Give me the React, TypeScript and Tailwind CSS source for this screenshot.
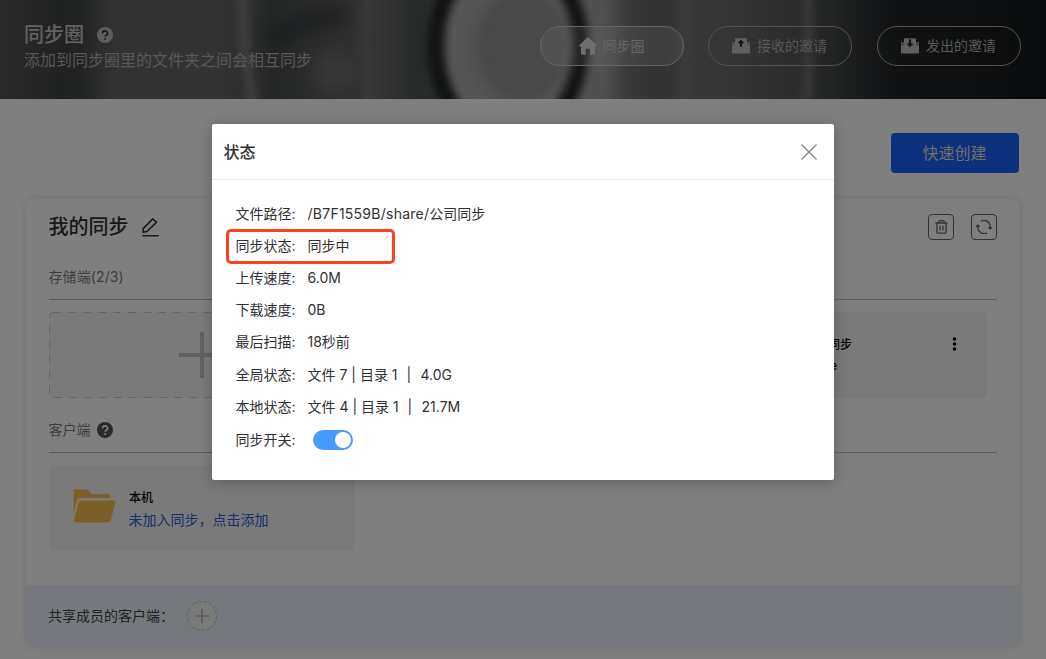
import type { ReactNode } from "react";

function HeaderBackdrop() {
  return (
    <svg className="absolute inset-0 h-full w-full" viewBox="0 0 1046 99" preserveAspectRatio="none" aria-hidden="true">
      <defs>
        <linearGradient id="base" gradientUnits="userSpaceOnUse" x1="0" y1="0" x2="1046" y2="0">
          <stop offset="0" stopColor="#545454" />
          <stop offset="0.025" stopColor="#4c4d4e" />
          <stop offset="0.06" stopColor="#404344" />
          <stop offset="0.08" stopColor="#46484a" />
          <stop offset="0.11" stopColor="#666666" />
          <stop offset="0.21" stopColor="#686868" />
          <stop offset="0.225" stopColor="#606162" />
          <stop offset="0.26" stopColor="#4a4d4e" />
          <stop offset="0.32" stopColor="#5a5b5c" />
          <stop offset="0.36" stopColor="#686868" />
          <stop offset="0.40" stopColor="#505354" />
          <stop offset="0.55" stopColor="#949494" />
          <stop offset="0.575" stopColor="#989898" />
          <stop offset="0.60" stopColor="#747474" />
          <stop offset="0.63" stopColor="#646464" />
          <stop offset="0.655" stopColor="#707070" />
          <stop offset="0.70" stopColor="#6c6c6c" />
          <stop offset="0.76" stopColor="#565758" />
          <stop offset="0.80" stopColor="#424546" />
          <stop offset="0.83" stopColor="#303335" />
          <stop offset="0.86" stopColor="#222427" />
          <stop offset="0.94" stopColor="#1b1d1f" />
          <stop offset="1" stopColor="#121518" />
        </linearGradient>
        <filter id="soft" filterUnits="userSpaceOnUse" x="-60" y="-160" width="1166" height="420" colorInterpolationFilters="sRGB">
          <feGaussianBlur stdDeviation="9" />
        </filter>
        <filter id="fine" filterUnits="userSpaceOnUse" x="-60" y="-160" width="1166" height="420" colorInterpolationFilters="sRGB">
          <feGaussianBlur stdDeviation="4" />
        </filter>
      </defs>
      <rect width="1046" height="99" fill="url(#base)" />
      <path d="M268 45Q290 20 350 14" fill="none" stroke="#34373a" strokeWidth="18" opacity="0.8" filter="url(#soft)" />
      <ellipse cx="335" cy="72" rx="22" ry="18" fill="#808080" opacity="0.6" filter="url(#soft)" />
      <path d="M371 -30Q359 50 374 130" fill="none" stroke="#7e7e7e" strokeWidth="8" opacity="0.8" filter="url(#fine)" />
      <path d="M243 -30Q239 45 259 130" fill="none" stroke="#949494" strokeWidth="8" opacity="0.8" filter="url(#fine)" />
      <path d="M806 -30Q812 50 804 130" fill="none" stroke="#858585" strokeWidth="8" opacity="0.7" filter="url(#fine)" />
      <path d="M681 -30Q688 50 681 130" fill="none" stroke="#848484" strokeWidth="6" opacity="0.6" filter="url(#fine)" />
      <ellipse cx="545" cy="48" rx="65" ry="150" fill="#a2a2a2" filter="url(#soft)" />
      <ellipse cx="508" cy="46" rx="72" ry="94" fill="#acacac" stroke="#212326" strokeWidth="17" filter="url(#fine)" />
      <ellipse cx="522" cy="46" rx="46" ry="56" fill="#8c8c8c" filter="url(#soft)" />
      <ellipse cx="523" cy="46" rx="40" ry="50" fill="#929292" filter="url(#fine)" />
    </svg>
  );
}

function HelpIcon({ className }: { className: string }) {
  return (
    <svg className={className} viewBox="0 0 16 16" width="16" height="16" aria-hidden="true">
      <circle cx="8" cy="8" r="8" fill="currentColor" />
      <path d="M5.6 6.2A2.45 2.3 0 1 1 9.2 8.2Q8.1 8.8 8.1 9.7" fill="none" className="stroke-(--mark)" strokeWidth="1.6" />
      <circle cx="8.1" cy="12" r="1" className="fill-(--mark)" />
    </svg>
  );
}

function HomeIcon() {
  return (
    <svg width="18" height="18" viewBox="0 0 18 18" fill="#dedede" aria-hidden="true">
      <path d="M8.3.4a1 1 0 0 1 1.4 0L17.7 8.3q.7.9-.4 1H16v7.4q0 1.1-1 1.1h-3.7v-5.3q0-.8-.8-.8h-3q-.8 0-.8.8v5.3H3q-1 0-1-1.1V9.300H.7q-1.100-.1-.4-1Z" />
    </svg>
  );
}

function TrayIcon({ down = false }: { down?: boolean }) {
  return (
    <svg width="18" height="16" viewBox="0 0 18 16" fill="#c0c0c0" aria-hidden="true">
      <path d="M0 4h3v3.500H0zM15 4h3v3.500h-3z" opacity=".65" />
      <path d="M0 7.200h3V1q0-.8.8-.8h10.400q.8 0 .8.8v6.200H18v7.300q0 1-1 1H1q-1 0-1-1Z" />
      {down && <path d="M5 6.300l4 4 4-4z" opacity=".3" fill="#292b2d" />}
      <path
        d={down ? "M7.900 1.300h2.200v4h2.300L9 8.900 5.600 5.300h2.300z" : "M9 1.500l3.500 3.800h-2.400v3.500H7.900V5.300H5.500z"}
        fill="#292b2d"
      />
    </svg>
  );
}

function Pill({ icon, active = false, children }: { icon: ReactNode; active?: boolean; children: ReactNode }) {
  return (
    <button
      className={`flex h-10 w-36 items-center justify-center rounded-full border text-sm ${active ? "gap-[6px] border-[#c8c8c8] bg-white/15 pr-px text-[#cccccc]" : "gap-[7px] border-[#a4a4a4] pr-px text-[#b0b0b0]"}`}
    >
      {icon}
      <span>{children}</span>
    </button>
  );
}

function FolderIcon() {
  return (
    <svg className="shrink-0" width="43" height="34" viewBox="0 0 43 34" fill="#f5c04c" aria-hidden="true">
      <path d="M.5 25V1.500Q.5.2 2 .2h11.500q1 0 1.800.7l4 4.300h16q2 0 2 2V9H8.500Q4.500 9 3.600 12.500Z" />
      <path d="M8 11.500h32.800q1.900 0 1.400 1.800L37.900 31.400q-.6 2-2.500 2H2.500q-2.100 0-1.600-2L5.500 13.500q.5-2 2.500-2Z" />
    </svg>
  );
}

function SquareButton({ children }: { children: ReactNode }) {
  return (
    <button className="flex size-[26px] items-center justify-center rounded-[4px] border border-[#666] text-[#666]">
      {children}
    </button>
  );
}

function SyncCard() {
  return (
    <section className="mx-[26px] mt-[26px] h-[448px] rounded-[8px] bg-white shadow-[0_0_9px_rgba(0,0,0,0.12)]">
      <div className="h-[386px] pt-[15px] pr-[23px] pl-[23px]">
        <div className="flex h-[26px] items-center justify-between">
          <div className="flex items-center gap-[13.5px]">
            <h2 className="-ml-[0.5px] text-[20px] leading-[26px] font-medium text-[#303133]">我的同步</h2>
            <svg width="17" height="19" viewBox="0 0 17 19" fill="none" stroke="#333" strokeWidth="1.600" strokeLinejoin="round" strokeLinecap="round" aria-hidden="true">
              <path d="M1.200 14.300V10.600L10.700.9l3.900 3.200L5 13.500Z" />
              <path d="M1 17.800h15.200" />
            </svg>
          </div>
          <div className="flex gap-[17px]">
            <SquareButton>
              <svg width="13" height="14" viewBox="0 0 13 14" fill="none" stroke="currentColor" strokeWidth="1.300" aria-hidden="true">
                <path d="M.3 3h12.400M3.800 3V1.500q0-.8.8-.8h3.800q.8 0 .8.8V3M1.900 3v8.900q0 1.200 1.200 1.200h6.800q1.200 0 1.200-1.200V3M5 5.800v4.700M8 5.800v4.700" />
              </svg>
            </SquareButton>
            <SquareButton>
              <svg width="16" height="14" viewBox="0 0 16 14" fill="none" stroke="currentColor" strokeWidth="1.200" aria-hidden="true">
                <path d="M5 1.200A6.200 6.200 0 0 1 14.200 7v1M11 12.800A6.200 6.200 0 0 1 1.800 7V6" />
                <path d="M.5 6.500 1.800 4.900l1.300 1.600ZM12.900 7.500l1.300 1.600 1.300-1.600Z" fill="currentColor" />
              </svg>
            </SquareButton>
          </div>
        </div>

        <div className="mt-[23px] flex h-[37px] items-start border-b border-[#bbb] text-sm leading-[28px] text-[#7c7c7c]">
          <span className="-ml-[0.5px] tracking-[0.1px]">存储端(2/3)</span>
        </div>
        <div className="mt-3 flex gap-[10px]">
          <div className="h-[86px] w-[306px] rounded-[4px] bg-[#f5f5f5]">
            <svg className="h-full w-full" viewBox="0 0 306 86" fill="none" aria-hidden="true">
              <rect x=".5" y=".5" width="305" height="85" rx="4" stroke="#c8c8c8" strokeDasharray="7.500 7.500" />
              <path d="M130 43h46M153 20v46" stroke="#c4c4c4" strokeWidth="4" />
            </svg>
          </div>
          <div className="h-[86px] w-[306px] rounded-[4px] bg-[#f5f5f5]" />
          <div className="flex h-[86px] w-[306px] justify-between rounded-[4px] bg-[#f5f5f5] pt-[22px] pr-[30px] text-xs text-black">
            <div className="w-[171px] text-right leading-[21px] font-medium">
              <p>公司同步</p>
              <p className="pr-[15px]">share</p>
            </div>
            <svg width="5" height="14" viewBox="0 0 5 14" className="mt-[3px]" aria-hidden="true">
              <circle cx="2.500" cy="2" r="1.800" />
              <circle cx="2.500" cy="7" r="1.800" />
              <circle cx="2.500" cy="12" r="1.800" />
            </svg>
          </div>
        </div>

        <div className="mt-[18px] flex h-[37px] items-start gap-[7px] border-b border-[#bbb] text-sm leading-[28px] text-[#7c7c7c]">
          <span className="-ml-[0.5px]">客户端</span>
          <HelpIcon className="mt-[6px] -ml-[0.5px] text-[#555] [--mark:#fff]" />
        </div>
        <div className="mt-3 flex h-[86px] w-[306px] items-start gap-[13px] rounded-[4px] bg-[#f5f5f5] pt-6 pl-6">
          <FolderIcon />
          <div className="-mt-px">
            <p className="text-xs leading-[20px] font-medium text-black">本机</p>
            <p className="-ml-[0.5px] text-sm leading-[23px] text-[#285fd3]">未加入同步，点击添加</p>
          </div>
        </div>
      </div>
      <footer className="flex h-[62px] items-center gap-[20px] rounded-b-[8px] bg-[#eaf2fd] pl-[22px]">
        <span className="text-sm text-[#444]">共享成员的客户端：</span>
        <svg className="-ml-[7px]" width="30" height="30" viewBox="0 0 30 30" fill="none" aria-hidden="true">
          <circle cx="15" cy="15" r="14.500" fill="#f5f5f5" stroke="#c0c0c0" strokeDasharray="3 2" />
          <path d="M8 15h14M15 8v14" stroke="#b8b8b8" strokeWidth="1.600" />
        </svg>
      </footer>
    </section>
  );
}

function StatusRow({ label, tall = false, children }: { label: string; tall?: boolean; children: ReactNode }) {
  return (
    <div className={`flex items-center ${tall ? "h-[33px]" : "h-8"}`}>
      <dt className="w-[72px]">{label}:</dt>
      <dd className="whitespace-pre">{children}</dd>
    </div>
  );
}

function StatusDialog() {
  return (
    <div role="dialog" className="relative h-[356px] w-[622px] rounded-[2px] bg-white shadow-[0_2px_14px_rgba(0,0,0,0.25)]">
      <header className="flex h-14 items-center justify-between border-b border-[#e8e8e8] pr-[17px] pl-[11.5px]">
        <h1 className="text-base font-medium text-[#303133]">状态</h1>
        <svg width="16" height="16" viewBox="0 0 16 16" stroke="#888" strokeWidth="1.400" aria-hidden="true">
          <path d="M.5.5l15 15M15.500.5l-15 15" />
        </svg>
      </header>
      <dl className="pt-[18px] pl-[23.5px] text-sm text-[#303133]">
        <StatusRow label="文件路径">
          <span className="tracking-[0.25px]">/B7F1559B/share/</span>公司同步
        </StatusRow>
        <StatusRow label="同步状态">同步中</StatusRow>
        <StatusRow label="上传速度">6.0M</StatusRow>
        <StatusRow label="下载速度">0B</StatusRow>
        <StatusRow label="最后扫描">18秒前</StatusRow>
        <StatusRow label="全局状态" tall>
          {"文件 7 | 目录 1  "}<span className="pl-px">|</span><span className="pl-[1.5px]">{"  4.0G"}</span>
        </StatusRow>
        <StatusRow label="本地状态">
          {"文件 4 | 目录 1  "}<span className="pl-px">|</span><span className="pl-[1.5px]">{"  21.7M"}</span>
        </StatusRow>
        <StatusRow label="同步开关" tall>
          <span className="ml-[5.5px] flex h-5 w-10 items-center justify-end rounded-full bg-[#469bff] pr-[2px]">
            <span className="size-4 rounded-full bg-white" />
          </span>
        </StatusRow>
      </dl>
      <div className="absolute top-[105px] left-[14px] h-[35px] w-[169px] rounded-[5px] border-[3px] border-[#f9421e]" />
    </div>
  );
}

export default function App() {
  return (
    <div className="relative h-[659px] w-full overflow-hidden bg-white font-['Inter','Noto_Sans_CJK_SC',sans-serif]">
      <header className="relative h-[99px] overflow-hidden">
        <HeaderBackdrop />
        <div className="relative flex items-start justify-between pt-[22px] pr-[25px] pl-6 text-[#c4c4c4]">
          <div>
            <div className="flex h-[26px] items-center gap-[13px]">
              <h1 className="text-[20px] leading-[26px] font-medium">同步圈</h1>
              <HelpIcon className="text-[#bcbcbc] [--mark:#333]" />
            </div>
            <p className="text-base leading-[25px] text-[#b0b0b0]">添加到同步圈里的文件夹之间会相互同步</p>
          </div>
          <nav className="mt-1 flex">
            <Pill icon={<HomeIcon />} active>同步圈</Pill>
            <div className="ml-6">
              <Pill icon={<TrayIcon />}>接收的邀请</Pill>
            </div>
            <div className="ml-[25px]">
              <Pill icon={<TrayIcon down />}>发出的邀请</Pill>
            </div>
          </nav>
        </div>
      </header>
      <div className="flex justify-end pt-[34px] pr-[27px]">
        <button className="h-10 w-32 rounded-[4px] bg-[#1763fa] pr-px text-base text-[#ddd]">快速创建</button>
      </div>
      <SyncCard />
      <div className="absolute inset-0 flex items-start justify-center bg-black/50 pt-[124px]">
        <StatusDialog />
      </div>
    </div>
  );
}
